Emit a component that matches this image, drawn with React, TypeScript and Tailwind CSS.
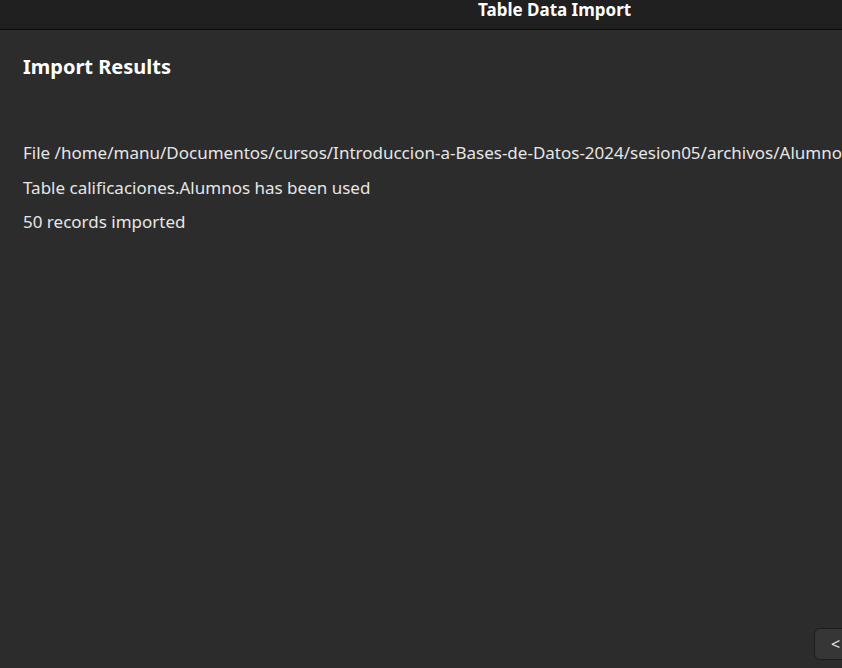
export default function App() {
  return (
    <div className="w-[842px] h-[668px] overflow-hidden bg-[#2c2c2c] flex flex-col" style={{ fontFamily: '"Noto Sans", "Open Sans", sans-serif' }}>
      <div className="h-[30px] shrink-0 bg-[#202020] border-b border-[#0c0c0c] relative">
        <div className="absolute left-[478px] top-0 leading-[20px] text-[17px] font-bold text-white whitespace-nowrap">Table Data Import</div>
      </div>
      <div className="flex-1 relative px-[23px]">
        <div className="pt-[24px] text-[20px] font-bold text-white leading-[26px]">Import Results</div>
        <div className="mt-[61px] flex flex-col gap-[10px] text-[17px] text-[#e6e6e6] leading-[24.5px] whitespace-nowrap">
          <div>File /home/manu/Documentos/cursos/Introduccion-a-Bases-de-Datos-2024/sesion05/archivos/Alumnos.csv was imported</div>
          <div>Table calificaciones.Alumnos has been used</div>
          <div>50 records imported</div>
        </div>
        <div className="absolute left-[814px] top-[598px] w-[80px] h-[32px] rounded-[6px] bg-[#363636] border border-[#1c1c1c] text-[#e6e6e6] text-[16px] leading-[30px] pl-[16px]">&lt; Back</div>
      </div>
    </div>
  );
}
